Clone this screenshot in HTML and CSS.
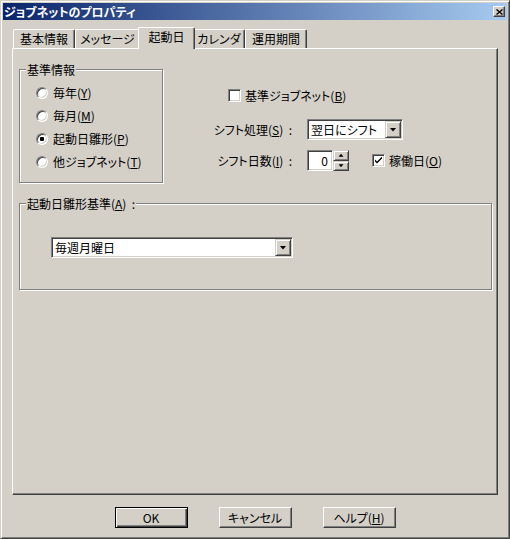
FILE: index.html
```html
<!DOCTYPE html>
<html lang="ja">
<head>
<meta charset="utf-8">
<title>ジョブネットのプロパティ</title>
<link rel="stylesheet" href="styles.css">
</head>
<body>
<div class="window">
  <div class="titlebar">
    <span class="title">ジョブネットのプロパティ</span>
    <span class="close"><svg width="7" height="6" viewBox="0 0 7 6"><path d="M0.5 0.5L6.5 5.5M6.5 0.5L0.5 5.5" stroke="#000" stroke-width="1.4"/></svg></span>
  </div>
  <div class="client">
    <div class="tabs">
      <div class="tab t1">基本情報</div>
      <div class="tab t2">メッセージ</div>
      <div class="tab sel t3">起動日</div>
      <div class="tab t4">カレンダ</div>
      <div class="tab t5">運用期間</div>
    </div>
    <div class="panel">
      <div class="top">
        <fieldset class="group g1">
          <legend>基準情報</legend>
          <div class="radios">
            <div class="radio"><span class="rb"></span><span>毎年(<u>Y</u>)</span></div>
            <div class="radio"><span class="rb"></span><span>毎月(<u>M</u>)</span></div>
            <div class="radio"><span class="rb on"></span><span>起動日雛形(<u>P</u>)</span></div>
            <div class="radio"><span class="rb"></span><span>他ジョブネット(<u>T</u>)</span></div>
          </div>
        </fieldset>
        <div class="right">
          <div class="check cb1"><span class="cbox"></span><span>基準ジョブネット(<u>B</u>)</span></div>
          <div class="grid">
            <span class="lbl">シフト処理(<u>S</u>)&nbsp;&nbsp;:</span>
            <div class="combo c1"><span class="val">翌日にシフト</span><span class="drop"><span class="tri"></span></span></div>
            <span class="lbl">シフト日数(<u>I</u>)&nbsp;&nbsp;:</span>
            <div class="row3">
              <div class="spin">
                <div class="edit">0</div>
                <div class="sbs">
                  <span class="sb"><span class="up"></span></span>
                  <span class="sb"><span class="dn"></span></span>
                </div>
              </div>
              <div class="check cb2"><span class="cbox"><svg width="7" height="7" viewBox="0 0 7 7"><path d="M0 2.5L0 4.5L2 6.5L7 1.5L7 -0.5L2 4.5Z" fill="#000"/></svg></span><span>稼働日(<u>O</u>)</span></div>
            </div>
          </div>
        </div>
      </div>
      <fieldset class="group g2">
        <legend>起動日雛形基準(<u>A</u>)&nbsp;&nbsp;:</legend>
        <div class="combo c2"><span class="val">毎週月曜日</span><span class="drop"><span class="tri"></span></span></div>
      </fieldset>
    </div>
    <div class="buttons">
      <div class="btn default">OK</div>
      <div class="btn">キャンセル</div>
      <div class="btn">ヘルプ(<u>H</u>)</div>
    </div>
  </div>
</div>
</body>
</html>
```

FILE: styles.css
```css
html, body {
  margin: 0;
  padding: 0;
  background: #d4d0c8;
}
body {
  font-family: "Noto Sans CJK JP", "Noto Sans", sans-serif;
  font-size: 12px;
  font-feature-settings: "palt";
  color: #000;
}
u { text-underline-offset: 1px; }

.window {
  width: 510px;
  height: 539px;
  box-sizing: border-box;
  background: #d4d0c8;
  border: 1px solid;
  border-color: #d4d0c8 #404040 #404040 #d4d0c8;
  box-shadow: inset 1px 1px #fff, inset -1px -1px #808080;
  padding: 2px;
  display: flex;
  flex-direction: column;
}

.titlebar {
  height: 17px;
  flex: none;
  background: linear-gradient(to right, #0a246a, #a6caf0);
  display: flex;
  align-items: center;
  justify-content: space-between;
  padding: 0 2px 0 1px;
}
.title {
  color: #fff;
  font-weight: bold;
  font-size: 12px;
  line-height: 1;
}
.close {
  width: 12px;
  height: 11px;
  box-sizing: border-box;
  background: #d4d0c8;
  border: 1px solid;
  border-color: #fff #404040 #404040 #fff;
  box-shadow: inset -1px -1px #808080;
  display: flex;
  align-items: center;
  justify-content: center;
}
.close svg { display: block; }

.client {
  flex: 1;
  padding: 7px 9px 0;
  display: flex;
  flex-direction: column;
}

.tabs {
  height: 21px;
  display: flex;
  align-items: flex-end;
  padding-left: 1px;
}
.tab {
  height: 19px;
  box-sizing: border-box;
  border: 1px solid;
  border-bottom: none;
  border-color: #fff #404040 #404040 #fff;
  border-radius: 2px 2px 0 0;
  box-shadow: inset -1px 0 #808080;
  display: flex;
  align-items: center;
  justify-content: center;
  line-height: 1;
  background: #d4d0c8;
}
.t1 { width: 62px; }
.t2 { width: 65px; }
.t3 { width: 57px; }
.t4 { width: 52px; }
.t5 { width: 62px; }
.tab.sel {
  height: 22px;
  margin: 0 -2px -1px;
  padding-bottom: 3px;
  position: relative;
  z-index: 1;
}

.panel {
  height: 447px;
  box-sizing: border-box;
  border: 1px solid;
  border-color: #fff #404040 #404040 #fff;
  box-shadow: inset -1px -1px #808080;
  padding: 14px 0 0 6px;
}

.top {
  display: flex;
  height: 120px;
}

.group {
  margin: 0;
  padding: 0;
  min-width: 0;
  box-sizing: border-box;
  border: 1px solid #808080;
  box-shadow: inset 1px 1px #fff, 1px 1px #fff;
}
.group legend {
  margin-left: 6px;
  padding: 0 1px;
  line-height: 13px;
  background: #d4d0c8;
}
.g1 {
  width: 144px;
  height: 120px;
  flex: none;
}
.g2 {
  width: 473px;
  height: 93px;
  margin-top: 14px;
}

.radios {
  padding: 5px 0 0 16px;
  display: flex;
  flex-direction: column;
}
.radio {
  height: 23px;
  display: flex;
  align-items: center;
  gap: 5px;
  white-space: nowrap;
}
.rb {
  width: 12px;
  height: 12px;
  flex: none;
  box-sizing: border-box;
  border-radius: 50%;
  background: #fff;
  border: 1px solid;
  border-color: #808080 #fff #fff #808080;
  box-shadow: inset 1px 1px #404040, inset -1px -1px #d4d0c8;
  display: flex;
  align-items: center;
  justify-content: center;
}
.rb.on::after {
  content: "";
  width: 4px;
  height: 4px;
  border-radius: 1px;
  background: #000;
}

.right {
  display: flex;
  flex-direction: column;
  padding-top: 24px;
}
.check {
  display: flex;
  align-items: center;
  gap: 4px;
  white-space: nowrap;
  height: 16px;
}
.cb1 { margin-left: 65px; }
.cbox {
  width: 13px;
  height: 13px;
  flex: none;
  box-sizing: border-box;
  background: #fff;
  border: 1px solid;
  border-color: #808080 #fff #fff #808080;
  box-shadow: inset 1px 1px #404040, inset -1px -1px #d4d0c8;
  display: flex;
  align-items: center;
  justify-content: center;
}
.cbox svg { display: block; }

.grid {
  display: grid;
  grid-template-columns: 138px auto;
  column-gap: 6px;
  row-gap: 10px;
  margin-top: 16px;
  align-items: center;
}
.lbl {
  text-align: right;
  padding-right: 9px;
  white-space: nowrap;
}

.combo {
  height: 21px;
  box-sizing: border-box;
  border: 1px solid;
  border-color: #808080 #fff #fff #808080;
  box-shadow: inset 1px 1px #404040, inset -1px -1px #d4d0c8;
  background: #fff;
  padding: 1px;
  display: flex;
  align-items: center;
}
.c1 { width: 96px; }
.c2 { width: 242px; margin: 27px 0 0 31px; }
.val {
  flex: 1;
  padding-left: 2px;
  line-height: 1;
  white-space: nowrap;
}
.drop {
  width: 16px;
  height: 17px;
  flex: none;
  box-sizing: border-box;
  background: #d4d0c8;
  border: 1px solid;
  border-color: #d4d0c8 #404040 #404040 #d4d0c8;
  box-shadow: inset 1px 1px #fff, inset -1px -1px #808080;
  display: flex;
  align-items: center;
  justify-content: center;
}
.tri {
  width: 7px;
  height: 4px;
  background: #000;
  clip-path: polygon(0 0, 100% 0, 50% 100%);
}

.row3 {
  display: flex;
  align-items: center;
}
.spin {
  display: flex;
  height: 21px;
}
.edit {
  width: 26px;
  height: 21px;
  box-sizing: border-box;
  border: 1px solid;
  border-color: #808080 #fff #fff #808080;
  box-shadow: inset 1px 1px #404040, inset -1px -1px #d4d0c8;
  background: #fff;
  text-align: right;
  padding-right: 4px;
  line-height: 19px;
}
.sbs {
  width: 16px;
  display: flex;
  flex-direction: column;
}
.sb {
  flex: 1;
  box-sizing: border-box;
  background: #d4d0c8;
  border: 1px solid;
  border-color: #d4d0c8 #404040 #404040 #d4d0c8;
  box-shadow: inset 1px 1px #fff, inset -1px -1px #808080;
  display: flex;
  align-items: center;
  justify-content: center;
}
.up, .dn {
  width: 5px;
  height: 3px;
  background: #000;
}
.up { clip-path: polygon(50% 0, 100% 100%, 0 100%); }
.dn { clip-path: polygon(0 0, 100% 0, 50% 100%); }
.cb2 { margin-left: 23px; }

.buttons {
  display: flex;
  justify-content: center;
  gap: 31px;
  margin-top: 12px;
}
.btn {
  width: 73px;
  height: 21px;
  box-sizing: border-box;
  background: #d4d0c8;
  border: 1px solid;
  border-color: #fff #404040 #404040 #fff;
  box-shadow: inset -1px -1px #808080;
  display: flex;
  align-items: center;
  justify-content: center;
  line-height: 1;
  white-space: nowrap;
}
.btn.default {
  border-color: #000;
  box-shadow: inset 1px 1px #fff, inset -1px -1px #404040, inset -2px -2px #808080;
}
```
